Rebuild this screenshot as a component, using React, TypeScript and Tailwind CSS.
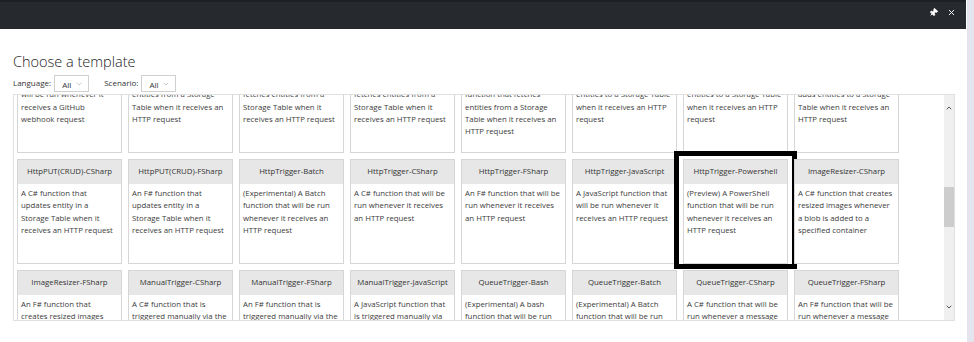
import { ChevronDown, ChevronUp, Pin, X } from "lucide-react";

type Template = { name: string; text: string; highlight?: boolean };

const templates: Template[] = [
  { name: "GitHubWebHook-JavaScript", text: "A JavaScript function that\nwill be run whenever it\nreceives a GitHub\nwebhook request" },
  { name: "HttpGET(CRUD)-CSharp", text: "A C# function that fetches\nentities from a Storage\nTable when it receives an\nHTTP request" },
  { name: "HttpGET(CRUD)-FSharp", text: "An F# function that\nfetches entities from a\nStorage Table when it\nreceives an HTTP request" },
  { name: "HttpGET(CRUD)-JavaScript", text: "A JavaScript function that\nfetches entities from a\nStorage Table when it\nreceives an HTTP request" },
  { name: "HttpGET(CRUD)-Python", text: "(Experimental) A Python\nfunction that fetches\nentities from a Storage\nTable when it receives an\nHTTP request" },
  { name: "HttpPOST(CRUD)-CSharp", text: "A C# function that adds\nentities to a Storage Table\nwhen it receives an HTTP\nrequest" },
  { name: "HttpPOST(CRUD)-FSharp", text: "An F# function that adds\nentities to a Storage Table\nwhen it receives an HTTP\nrequest" },
  { name: "HttpPOST(CRUD)-JavaScript", text: "A JavaScript function that\nadds entities to a Storage\nTable when it receives an\nHTTP request" },
  { name: "HttpPUT(CRUD)-CSharp", text: "A C# function that\nupdates entity in a\nStorage Table when it\nreceives an HTTP request" },
  { name: "HttpPUT(CRUD)-FSharp", text: "An F# function that\nupdates entity in a\nStorage Table when it\nreceives an HTTP request" },
  { name: "HttpTrigger-Batch", text: "(Experimental) A Batch\nfunction that will be run\nwhenever it receives an\nHTTP request" },
  { name: "HttpTrigger-CSharp", text: "A C# function that will be\nrun whenever it receives\nan HTTP request" },
  { name: "HttpTrigger-FSharp", text: "An F# function that will be\nrun whenever it receives\nan HTTP request" },
  { name: "HttpTrigger-JavaScript", text: "A JavaScript function that\nwill be run whenever it\nreceives an HTTP request" },
  { name: "HttpTrigger-Powershell", text: "(Preview) A PowerShell\nfunction that will be run\nwhenever it receives an\nHTTP request", highlight: true },
  { name: "ImageResizer-CSharp", text: "A C# function that creates\nresized images whenever\na blob is added to a\nspecified container" },
  { name: "ImageResizer-FSharp", text: "An F# function that\ncreates resized images\nwhenever a blob is added\nto a specified container" },
  { name: "ManualTrigger-CSharp", text: "A C# function that is\ntriggered manually via the\nportal Run button" },
  { name: "ManualTrigger-FSharp", text: "An F# function that is\ntriggered manually via the\nportal Run button" },
  { name: "ManualTrigger-JavaScript", text: "A JavaScript function that\nis triggered manually via\nthe portal Run button" },
  { name: "QueueTrigger-Bash", text: "(Experimental) A bash\nfunction that will be run\nwhenever a message is\nadded to a queue" },
  { name: "QueueTrigger-Batch", text: "(Experimental) A Batch\nfunction that will be run\nwhenever a message is\nadded to a queue" },
  { name: "QueueTrigger-CSharp", text: "A C# function that will be\nrun whenever a message\nis added to a queue" },
  { name: "QueueTrigger-FSharp", text: "An F# function that will be\nrun whenever a message\nis added to a queue" },
];

function Filter({ label, value }: { label: string; value: string }) {
  return (
    <div className="flex items-center gap-[3px]">
      <span className="pb-[2px] text-[8px] text-[#333]">{label}</span>
      <div className="flex h-[17px] w-[35px] items-center justify-between border border-[#d0d0d0] pl-[7px] pr-[5px]">
        <span className="pt-[2px] text-[8px] text-[#333]">{value}</span>
        <ChevronDown size={8} strokeWidth={1.5} className="text-[#999]" />
      </div>
    </div>
  );
}

function Card({ t }: { t: Template }) {
  return (
    <div className="relative flex h-[105px] flex-col border border-[#d6d6d6] bg-white">
      <div className="flex h-[24px] items-center justify-center whitespace-nowrap bg-[#e7e7e7] text-[7.8px] text-[#333]">
        {t.name}
      </div>
      <div className="whitespace-pre px-[3px] pt-[3px] text-[7.8px] leading-[12.3px] text-[#3c3c3c]">
        {t.text}
      </div>
      {t.highlight && (
        <div className="absolute -bottom-[6px] -left-[10px] -right-[10px] -top-[9px] border-[5px] border-black" />
      )}
    </div>
  );
}

export default function App() {
  return (
    <div
      className="flex h-[342px] w-[974px] overflow-hidden bg-white"
      style={{ fontFamily: '"Open Sans", "Noto Sans", sans-serif' }}
    >
      <div className="flex w-[966px] flex-col">
        <div className="flex h-[29px] items-center justify-end gap-[9px] border-t-[2px] border-[#1d2023] bg-[#262a2e] pb-[6px] pr-[10px] text-white">
          <Pin size={9} strokeWidth={2.5} className="rotate-45" fill="white" />
          <X size={9} strokeWidth={2.5} />
        </div>

        <div className="flex flex-col px-[13px] pt-[23px]">
          <h1 className="text-[14.5px] font-light leading-[20px] text-[#222]">Choose a template</h1>
          <div className="mt-[3px] flex items-center gap-[15px]">
            <Filter label="Language:" value="All" />
            <Filter label="Scenario:" value="All" />
          </div>

          <div className="mt-[2px] flex h-[227px] w-[942px] border border-[#e0e0e0]">
            <div className="flex-1 overflow-hidden pl-[3px]">
              <div className="-mt-[47px] grid grid-cols-[repeat(8,105px)] gap-[6px]">
                {templates.map((t) => (
                  <Card key={t.name} t={t} />
                ))}
              </div>
            </div>
            <div className="flex w-[10px] flex-col bg-[#f0f0f0]">
              <div className="flex h-[26px] items-center justify-center">
                <ChevronUp size={8} strokeWidth={3} className="text-[#555]" />
              </div>
              <div className="mt-[66px] h-[40px] bg-[#cdcdcd]" />
              <div className="flex-1" />
              <div className="flex h-[26px] items-center justify-center">
                <ChevronDown size={8} strokeWidth={3} className="text-[#555]" />
              </div>
            </div>
          </div>
        </div>
      </div>
      <div className="w-[8px] border-l border-white bg-[#e4e4ee]" />
    </div>
  );
}
